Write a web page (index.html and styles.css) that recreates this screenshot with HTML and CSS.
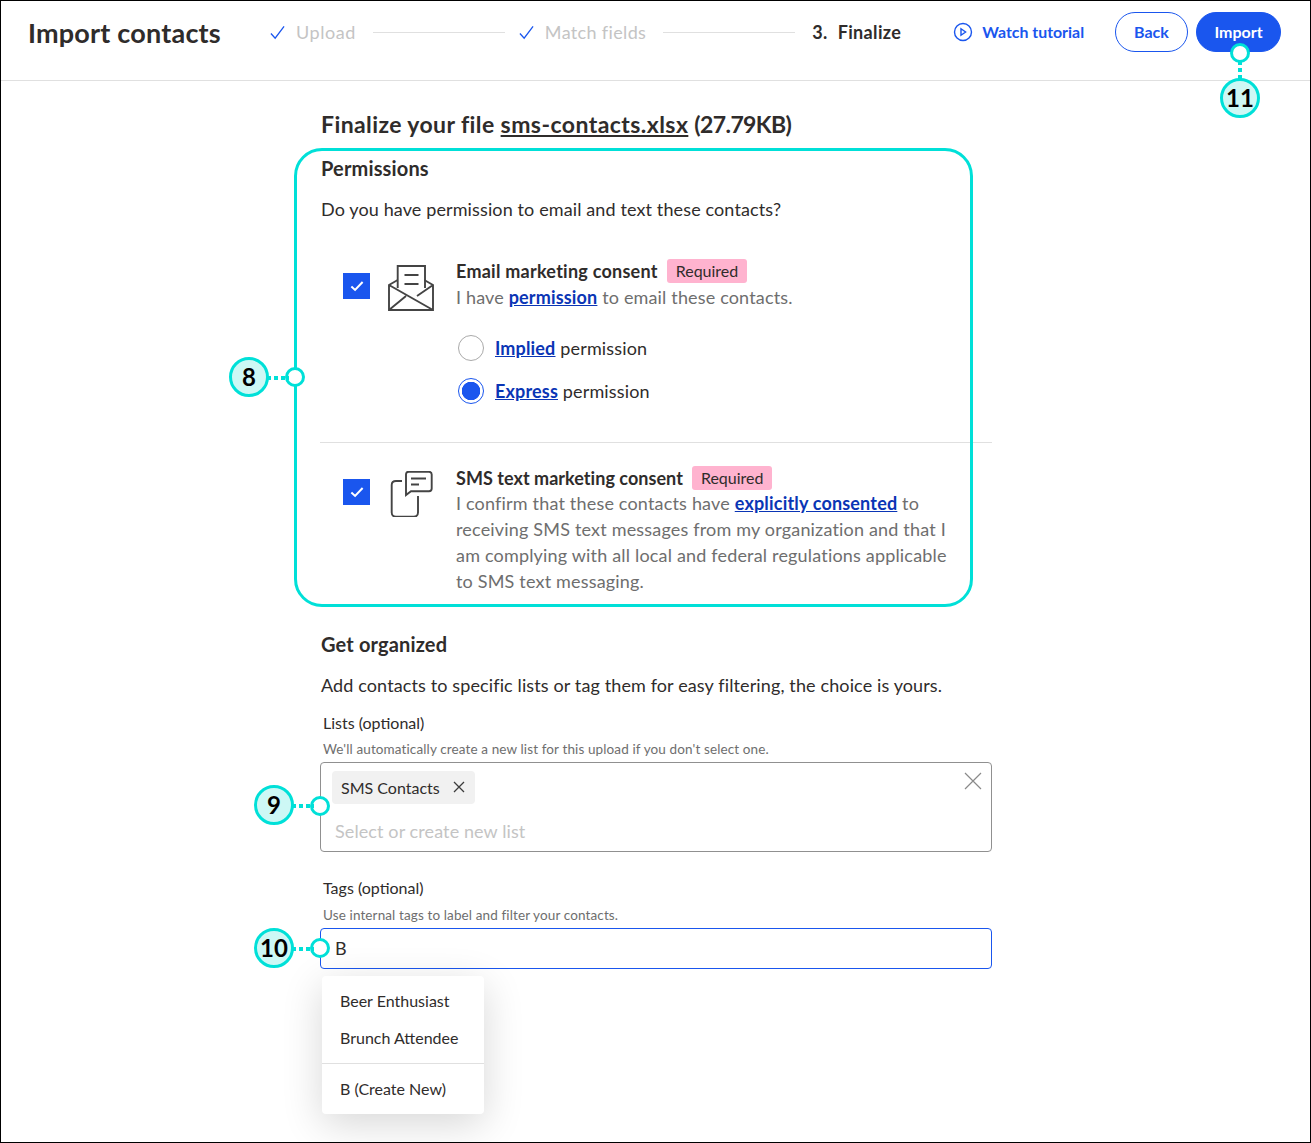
FILE: index.html
```html
<!DOCTYPE html>
<html lang="en">
<head>
<meta charset="utf-8">
<title>Import contacts</title>
<link rel="stylesheet" href="styles.css">
</head>
<body>
<div class="frame">
  <header class="topbar">
    <h1 class="title">Import contacts</h1>
    <ol class="steps">
      <li class="step done step-upload"><svg class="tick" viewBox="0 0 16 16"><path d="M1 9l4.5 5L15 1.5"/></svg>Upload</li>
      <li class="rule"></li>
      <li class="step done"><svg class="tick" viewBox="0 0 16 16"><path d="M1 9l4.5 5L15 1.5"/></svg>Match fields</li>
      <li class="rule"></li>
      <li class="step current"><span class="num">3.</span>Finalize</li>
    </ol>
    <a class="tutorial"><svg class="play" viewBox="0 0 20 20"><circle cx="10" cy="10" r="8.5"/><path d="M8 6.8v6.4l4.6-3.2z"/></svg>Watch tutorial</a>
    <button class="btn btn-back">Back</button>
    <button class="btn btn-import">Import</button>
  </header>

  <main class="content">
    <h2 class="file-title">Finalize your file <u class="file-name">sms-contacts.xlsx</u> <span class="file-size">(27.79KB)</span></h2>

    <section class="permissions">
      <h3 class="section-title">Permissions</h3>
      <p class="lead">Do you have permission to email and text these contacts?</p>

      <div class="consent consent-email">
        <span class="check"><svg viewBox="0 0 16 16"><path d="M3 8.5l3.3 3L13 4.5"/></svg></span>
        <svg class="big-icon" viewBox="0 0 46 46">
          <path d="M9.700 15L1 20v25h44V20l-8.700-5M1 20l44 25M1 45l17-14M45 20L29 31"/>
          <path d="M9.700 23V1H37v22"/>
          <path d="M16.500 10h14M16.500 19h14"/>
        </svg>
        <div class="consent-body">
          <div class="consent-head"><strong>Email marketing consent</strong><span class="req">Required</span></div>
          <p class="consent-text">I have <a>permission</a> to email these contacts.</p>
          <div class="radio-row"><span class="radio"></span><span><a>Implied</a> permission</span></div>
          <div class="radio-row"><span class="radio on"></span><span><a>Express</a> permission</span></div>
        </div>
      </div>

      <div class="consent consent-sms">
        <span class="check"><svg viewBox="0 0 16 16"><path d="M3 8.500l3.300 3L13 4.500"/></svg></span>
        <svg class="big-icon" viewBox="0 0 46 46">
          <path d="M14 10H8Q3.700 10 3.700 14v27.500q0 4.200 4.300 4.200h17.700q4.300 0 4.300-4.200V25"/>
          <path d="M18 24V3.500q0-2.700 2.700-2.700H41q2.700 0 2.700 2.700v14q0 2.700-2.700 2.700H23z"/>
          <path d="M23 7.500h15M23 13.500h8"/>
        </svg>
        <div class="consent-body">
          <div class="consent-head"><strong>SMS text marketing consent</strong><span class="req">Required</span></div>
          <p class="consent-text">I confirm that these contacts have <a>explicitly consented</a> to receiving SMS text messages from my organization and that I am complying with all local and federal regulations applicable to SMS text messaging.</p>
        </div>
      </div>
    </section>

    <section class="organized">
      <h3 class="section-title">Get organized</h3>
      <p class="lead">Add contacts to specific lists or tag them for easy filtering, the choice is yours.</p>

      <label class="field-label">Lists (optional)</label>
      <p class="field-hint">We'll automatically create a new list for this upload if you don't select one.</p>
      <div class="multi">
        <span class="chip">SMS Contacts<svg viewBox="0 0 12 12"><path d="M1 1l10 10M11 1L1 11"/></svg></span>
        <span class="placeholder">Select or create new list</span>
        <svg class="clear" viewBox="0 0 18 18"><path d="M1 1l16 16M17 1L1 17"/></svg>
      </div>

      <label class="field-label tags-label">Tags (optional)</label>
      <p class="field-hint tags-hint">Use internal tags to label and filter your contacts.</p>
      <div class="tag-input">B</div>
      <ul class="menu">
        <li>Beer Enthusiast</li>
        <li>Brunch Attendee</li>
        <li class="menu-create">B (Create New)</li>
      </ul>
    </section>
  </main>

  <div class="callout-box"></div>
  <span class="dot dot-8"></span><span class="link link-8"></span><span class="badge badge-8">8</span>
  <span class="dot dot-9"></span><span class="link link-9"></span><span class="badge badge-9">9</span>
  <span class="dot dot-10"></span><span class="link link-10"></span><span class="badge badge-10">10</span>
  <span class="dot dot-11"></span><span class="link-v link-11"></span><span class="badge badge-11">11</span>
</div>
</body>
</html>
```
FILE: styles.css
```css
* { box-sizing: border-box; }
html, body { margin: 0; padding: 0; }
body { font-family: Lato, "Noto Sans", sans-serif; color: #2f2c2b; background: #fff; }
a { color: #0a35b5; font-weight: 700; text-decoration: underline; }
p, h1, h2, h3, ul, ol { margin: 0; padding: 0; list-style: none; }

.frame { position: relative; width: 1311px; height: 1143px; border: 1px solid #000; overflow: hidden; }

.topbar { display: flex; align-items: center; height: 80px; border-bottom: 1px solid #e0e0e0; padding: 11px 29px 28px 27px; }
.title { font-size: 27px; letter-spacing: .2px; font-weight: 700; width: 242px; color: #2f2c2b; white-space: nowrap; }
.steps { display: flex; align-items: center; font-size: 18px; letter-spacing: .35px; }
.step { display: flex; align-items: center; white-space: nowrap; }
.step-upload { letter-spacing: .55px; }
.done { color: #c4c4c4; }
.tick { width: 15px; height: 15px; margin-right: 11px; fill: none; stroke: #1a56ee; stroke-width: 1.4; }
.rule { width: 132px; height: 1px; background: #e0e0e0; margin: 0 14px 0 17px; }
.rule + .current { margin-left: 3px; }
.current { font-weight: 700; }
.num { margin-right: 10px; }
.tutorial { display: flex; align-items: center; margin-left: 52px; padding-bottom: 1px; color: #1a56ee; font-size: 15.9px; text-decoration: none; white-space: nowrap; }
.play { width: 20px; height: 20px; margin-right: 9px; fill: none; stroke: #1a56ee; stroke-width: 1.4; }
.btn { height: 40px; border-radius: 20px; padding: 0 0 2px; font: 700 16px Lato, sans-serif; color: #1a56ee; background: #fff; border: 1px solid #1a56ee; }
.btn-back { width: 73px; margin-left: auto; margin-right: 8px; }
.btn-import { width: 85px; background: #1a56ee; color: #fff; }

.content { width: 672px; margin-left: 319px; padding-top: 29px; }
.file-title { font-size: 23px; letter-spacing: .4px; font-weight: 700; line-height: 28px; padding-left: 1px; }
.file-name { letter-spacing: .44px; }
.file-size { letter-spacing: -.6px; }
.permissions { padding-top: 18px; height: 480px; }
.section-title { font-size: 20px; letter-spacing: .15px; font-weight: 700; line-height: 24px; padding-left: 1px; }
.lead { font-size: 18px; letter-spacing: .12px; line-height: 24px; margin-top: 17px; padding-left: 1px; }
.consent { display: flex; align-items: flex-start; }
.consent-email { padding: 37px 0 0 23px; border-bottom: 1px solid #e0e0e0; height: 222px; }
.consent-sms { padding: 22px 14px 0 23px; }
.check { flex: none; width: 27px; height: 26px; background: #1a56ee; display: flex; align-items: center; justify-content: center; margin-top: 15px; }
.consent-sms .check { margin-top: 14px; }
.check svg { width: 18px; height: 18px; fill: none; stroke: #fff; stroke-width: 1.8; }
.big-icon { flex: none; width: 46px; height: 46px; margin: 7px 22px 0 18px; fill: none; stroke: #444; stroke-width: 1.9; }
.consent-sms .big-icon { margin-top: 6px; }
.consent-body { width: 504px; }
.consent-head { display: flex; align-items: center; font-size: 18px; line-height: 26px; }
.consent-head strong { font-weight: 700; }
.consent-email strong { letter-spacing: .25px; }
.consent-sms strong { letter-spacing: .04px; }
.req { margin-left: 9px; background: #ffb3cf; border-radius: 3px; padding: 0 9px; font-size: 16px; line-height: 24px; }
.consent-text { font-size: 18px; letter-spacing: .16px; line-height: 26px; color: #6e6e6e; }
.consent-sms .consent-text { margin-top: -1px; letter-spacing: .18px; }
.radio-row { display: flex; align-items: center; gap: 11px; margin-left: 2px; font-size: 18px; letter-spacing: .16px; height: 28px; margin-top: 15px; }
.consent-text + .radio-row { margin-top: 24px; }
.radio { width: 26px; height: 26px; border-radius: 50%; border: 1px solid #aaa; flex: none; }
.radio.on { border-color: #1a56ee; background: radial-gradient(circle, #1a56ee 0 9px, #fff 9.5px); }

.organized { padding-top: 14px; }
.field-label { display: block; font-size: 16px; line-height: 20px; margin: 16px 0 0 3px; }
.field-hint { font-size: 13.5px; letter-spacing: .12px; line-height: 18px; color: #6e6e6e; margin: 7px 0 0 3px; }
.multi { position: relative; height: 90px; border: 1px solid #909090; border-radius: 4px; padding: 8px 11px; margin-top: 4px; }
.chip { display: inline-flex; align-items: center; height: 33px; background: #f1f1f1; border-radius: 4px; padding: 0 10px 1px 9px; font-size: 16px; }
.chip svg { width: 12px; height: 12px; margin-left: 13px; fill: none; stroke: #3c3c3c; stroke-width: 1.3; }
.placeholder { display: block; margin: 15px 0 0 3px; font-size: 18px; letter-spacing: .1px; color: #c4c4c4; line-height: 24px; }
.clear { position: absolute; right: 9px; top: 9px; width: 18px; height: 18px; fill: none; stroke: #8a8a8a; stroke-width: 1.2; }
.tags-label { margin-top: 26px; }
.tags-hint { margin-top: 8px; }
.tag-input { height: 41px; border: 1px solid #1a56ee; border-radius: 4px; margin-top: 4px; padding: 0 14px; line-height: 38px; font-size: 18px; }
.menu { width: 162px; margin: 7px 0 0 2px; background: #fff; border-radius: 4px; box-shadow: 0 10px 40px rgba(0,0,0,.16); padding: 6px 0 7px; font-size: 16px; }
.menu li { line-height: 37px; padding: 0 18px; }
.menu .menu-create { border-top: 1px solid #e0e0e0; margin-top: 7px; padding-top: 6px; }

.callout-box { position: absolute; left: 293px; top: 147px; width: 679px; height: 459px; border: 3px solid #00e0d8; border-radius: 28px; }
.dot { position: absolute; width: 20px; height: 20px; border-radius: 50%; border: 3px solid #00e0d8; background: #fff; }
.dot-8 { left: 284px; top: 366px; }
.dot-9 { left: 309px; top: 795px; }
.dot-10 { left: 309px; top: 937px; }
.dot-11 { left: 1229px; top: 42px; }
.link { position: absolute; height: 4px; width: 22px; background: repeating-linear-gradient(90deg, #00e0d8 0 4px, transparent 4px 7px); }
.link-8 { left: 266px; top: 375px; }
.link-9 { left: 291px; top: 803px; }
.link-10 { left: 291px; top: 946px; }
.link-v { position: absolute; width: 4px; height: 22px; background: repeating-linear-gradient(180deg, #00e0d8 0 4px, transparent 4px 7px); }
.link-11 { left: 1237px; top: 60px; }
.badge { position: absolute; width: 40px; height: 40px; border-radius: 50%; border: 3px solid #00e0d8; background: #cdf8f5; color: #000; font: 700 24px/34px Lato, sans-serif; text-align: center; }
.badge-8 { left: 228px; top: 356px; }
.badge-9 { left: 253px; top: 784px; }
.badge-10 { left: 253px; top: 927px; }
.badge-11 { left: 1219px; top: 77px; }
```
